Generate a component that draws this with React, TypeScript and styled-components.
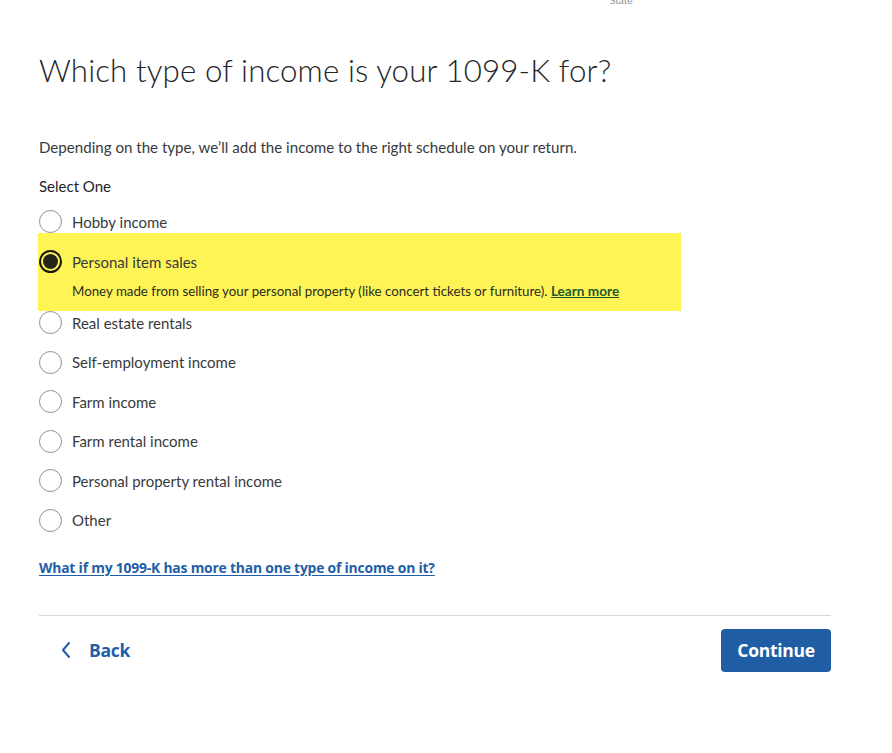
import React from "react";
import styled, { createGlobalStyle } from "styled-components";

const Global = createGlobalStyle`
  html, body { margin: 0; padding: 0; background: #fff; }
  body { font-family: Lato, "Noto Sans", sans-serif; color: #393a3d; }
`;

const Page = styled.div`
  width: 892px;
  height: 753px;
  position: relative;
  overflow: hidden;
  background: #fff;
`;

const StateLabel = styled.div`
  position: absolute;
  top: -6px;
  left: 610px;
  font-size: 10px;
  color: #8d9096;
`;

const Content = styled.main`
  width: 792px;
  padding: 49px 0 0 39px;
  display: flex;
  flex-direction: column;
`;

const Title = styled.h1`
  margin: 0;
  font-family: Lato, sans-serif;
  font-weight: 300;
  font-size: 31.3px;
  line-height: 42px;
  color: #242529;
  letter-spacing: 0.1px;
`;

const Intro = styled.p`
  margin: 45px 0 0;
  font-size: 15.1px;
  line-height: 22px;
  color: #393a3d;
`;

const GroupLabel = styled.div`
  margin-top: 17px;
  font-size: 15px;
  line-height: 22px;
  color: #242529;
`;

const Options = styled.div`
  margin-top: 13px;
  display: flex;
  flex-direction: column;
`;

const Option = styled.label<{ $active?: boolean }>`
  display: flex;
  flex-direction: column;
  margin-left: ${(p) => (p.$active ? "-1px" : "0")};
  width: ${(p) => (p.$active ? "642px" : "auto")};
  background: ${(p) => (p.$active ? "#fff455" : "transparent")};
  padding: ${(p) => (p.$active ? "17px 0 11px 1px" : "0")};
  margin-bottom: ${(p) => (p.$active ? "0" : "16.6px")};
  margin-top: ${(p) => (p.$active ? "-16.6px" : "0")};
`;

const OptionRow = styled.span`
  display: flex;
  align-items: center;
  gap: 10px;
  height: 23px;
`;

const Radio = styled.span<{ $checked?: boolean }>`
  box-sizing: border-box;
  width: 23px;
  height: 23px;
  border-radius: 50%;
  border: ${(p) => (p.$checked ? "2px solid #16170f" : "1px solid #8d9096")};
  display: flex;
  align-items: center;
  justify-content: center;
  flex-shrink: 0;
  &::after {
    content: "";
    display: ${(p) => (p.$checked ? "block" : "none")};
    width: 15px;
    height: 15px;
    border-radius: 50%;
    background: #23241a;
  }
`;

const OptionText = styled.span`
  font-size: 15px;
  color: #393a3d;
`;

const OptionHelp = styled.span`
  margin: 9px 0 0 33px;
  font-size: 13.3px;
  line-height: 18px;
  color: #2b2c22;
`;

const LearnMore = styled.a`
  color: #1d5a2e;
  font-weight: 700;
  font-size: 13.6px;
  text-decoration: underline;
`;

const HelpLink = styled.a`
  margin-top: 9px;
  font-family: "Open Sans", sans-serif;
  font-weight: 700;
  font-size: 13.9px;
  color: #1f5ea8;
  text-decoration: underline;
  text-underline-offset: 2px;
  letter-spacing: -0.2px;
  align-self: flex-start;
`;

const Divider = styled.hr`
  margin: 38px 0 0;
  border: 0;
  border-top: 1px solid #d4d7dc;
  width: 792px;
`;

const Footer = styled.div`
  margin-top: 13px;
  display: flex;
  justify-content: space-between;
  align-items: center;
`;

const BackButton = styled.button`
  display: flex;
  align-items: center;
  gap: 17px;
  background: none;
  border: 0;
  padding: 0 0 0 21px;
  font-family: "Open Sans", sans-serif;
  font-weight: 700;
  font-size: 17.5px;
  color: #1f5ea8;
  letter-spacing: -0.3px;
`;

const ContinueButton = styled.button`
  width: 110px;
  height: 43px;
  border: 0;
  border-radius: 4px;
  background: #1f5ea5;
  color: #fff;
  font-family: "Open Sans", sans-serif;
  font-weight: 700;
  font-size: 17.5px;
  letter-spacing: -0.3px;
`;

const options = [
  "Hobby income",
  "Personal item sales",
  "Real estate rentals",
  "Self-employment income",
  "Farm income",
  "Farm rental income",
  "Personal property rental income",
  "Other",
];

export default function App() {
  return (
    <Page>
      <Global />
      <StateLabel>State</StateLabel>
      <Content>
        <Title>Which type of income is your 1099-K for?</Title>
        <Intro>Depending on the type, we’ll add the income to the right schedule on your return.</Intro>
        <GroupLabel>Select One</GroupLabel>
        <Options>
          {options.map((o, i) => {
            const active = i === 1;
            return (
              <Option key={o} $active={active}>
                <OptionRow>
                  <Radio $checked={active} />
                  <OptionText>{o}</OptionText>
                </OptionRow>
                {active && (
                  <OptionHelp>
                    Money made from selling your personal property (like concert tickets or furniture).{" "}
                    <LearnMore href="#">Learn more</LearnMore>
                  </OptionHelp>
                )}
              </Option>
            );
          })}
        </Options>
        <HelpLink href="#">What if my 1099-K has more than one type of income on it?</HelpLink>
        <Divider />
        <Footer>
          <BackButton>
            <svg width="12" height="18" viewBox="0 0 12 18" fill="none">
              <path d="M9 2 L3 9 L9 16" stroke="#1f5ea8" strokeWidth="2" strokeLinecap="round" strokeLinejoin="round" />
            </svg>
            Back
          </BackButton>
          <ContinueButton>Continue</ContinueButton>
        </Footer>
      </Content>
    </Page>
  );
}
